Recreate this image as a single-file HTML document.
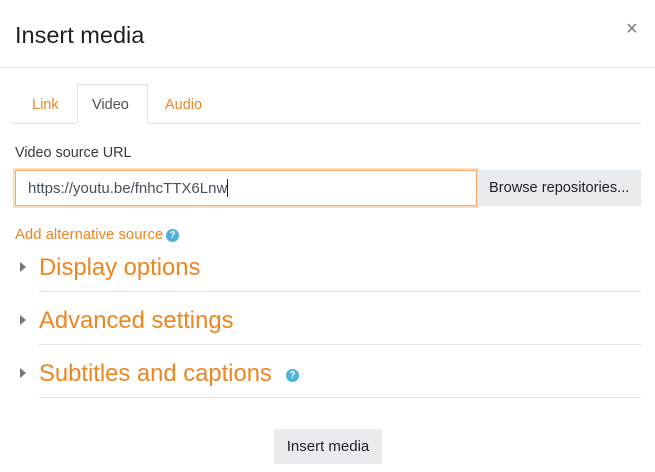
<!DOCTYPE html>
<html><head><meta charset="utf-8"><style>
*{margin:0;padding:0;box-sizing:border-box}
body{width:655px;height:472px;background:#fff;font-family:"Liberation Sans",sans-serif;color:#373a3c;position:relative;overflow:hidden}
.a{position:absolute;white-space:nowrap}
.o{color:#f0841f}
.line{position:absolute;height:1px;background:#dee2e6}
.help{position:absolute;width:13px;height:13px;border-radius:50%;background:#4cb2da;color:#fff;font-size:10px;font-weight:bold;text-align:center;line-height:13px}
.tri{position:absolute;width:0;height:0;border-top:5px solid transparent;border-bottom:5px solid transparent;border-left:6px solid #777}
.h{font-size:23.8px}
</style></head><body>
<div class="a" style="left:15px;top:22px;font-size:23.5px;color:#1d2125">Insert media</div>
<div class="a" style="left:626px;top:18px;font-size:20px;color:#777">×</div>
<div class="line" style="left:0;top:67px;width:655px;background:#e9ecef"></div>

<div class="line" style="left:12px;top:123px;width:629px"></div>
<div class="a" style="left:77px;top:84px;width:71px;height:40px;border:1px solid #dee2e6;border-bottom:1px solid #fff;background:#fff"></div>
<div class="a o" style="left:32px;top:97px;font-size:14.5px">Link</div>
<div class="a" style="left:92px;top:97px;font-size:14.5px;color:#495057">Video</div>
<div class="a o" style="left:165px;top:97px;font-size:14.5px">Audio</div>

<div class="a" style="left:15px;top:145px;font-size:14.4px;color:#373a3c">Video source URL</div>
<div class="a" style="left:13px;top:168px;width:466px;height:40px;background:#fbdcc0"></div>
<div class="a" style="left:15px;top:170px;width:462px;height:36px;background:#fff;border:1px solid #f4ab6a;padding:8px 12px;font-size:15px;color:#495057">https://youtu.be/fnhcTTX6Lnw<span style="display:inline-block;width:1px;height:18px;background:#222;vertical-align:-4px"></span></div>
<div class="a" style="left:478px;top:170px;width:163px;height:36px;background:#e9ecef;font-size:14.6px;color:#1d2125;padding:10px 0 0 11px">Browse repositories...</div>

<div class="a o" style="left:15px;top:227px;font-size:14.9px">Add alternative source</div>
<div class="help" style="left:166px;top:229px">?</div>

<div class="tri" style="left:20px;top:262px"></div>
<div class="a o h" style="left:39px;top:254px">Display options</div>
<div class="line" style="left:39px;top:291px;width:602px"></div>

<div class="tri" style="left:20px;top:315px"></div>
<div class="a o h" style="left:39px;top:307px">Advanced settings</div>
<div class="line" style="left:39px;top:344px;width:602px"></div>

<div class="tri" style="left:20px;top:368px"></div>
<div class="a o h" style="left:39px;top:360px">Subtitles and captions</div>
<div class="help" style="left:286px;top:369px">?</div>
<div class="line" style="left:39px;top:397px;width:602px"></div>

<div class="a" style="left:274px;top:429px;width:108px;height:35px;background:#e9ecef;font-size:15px;color:#1d2125;text-align:center;line-height:36px">Insert media</div>
</body></html>
